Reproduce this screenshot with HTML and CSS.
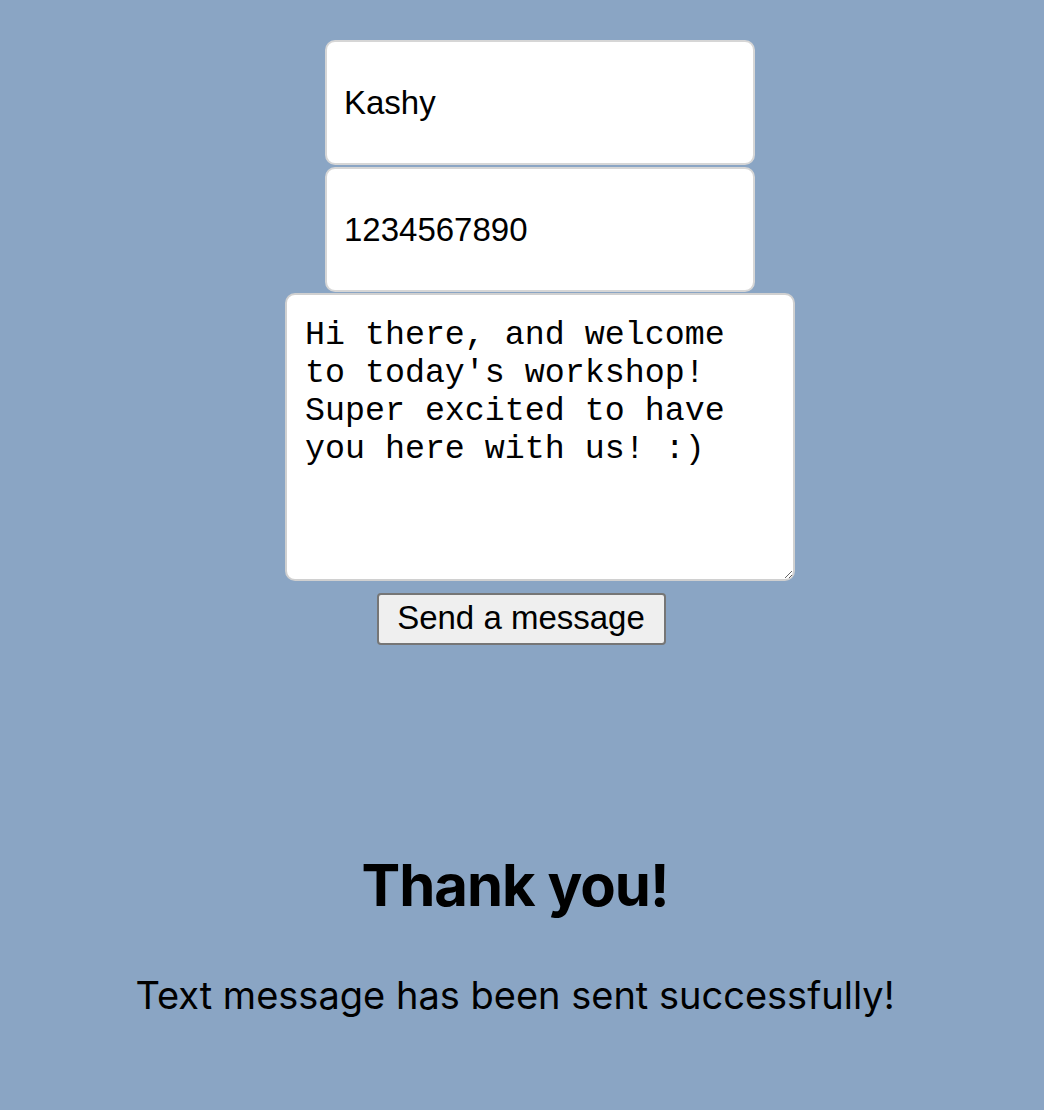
FILE: index.html
```html
<!DOCTYPE html>
<html>
<head>
<meta charset="utf-8">
<link rel="stylesheet" href="styles.css">
</head>
<body>
<main class="page">
  <form class="form">
    <input class="field" type="text" value="Kashy">
    <input class="field field-second" type="text" value="1234567890">
    <textarea class="message">Hi there, and welcome to today's workshop! Super excited to have you here with us! :)</textarea>
    <button class="send" type="button">Send a message</button>
  </form>
  <section class="thanks">
    <h1 class="thanks-title">Thank you!</h1>
    <p class="thanks-text">Text message has been sent successfully!</p>
  </section>
</main>
</body>
</html>
```
FILE: styles.css
```css
html, body {
  margin: 0;
  padding: 0;
  background: #8aa5c4;
}
body {
  width: 1044px;
  height: 1110px;
  overflow: hidden;
}
.page {
  display: flex;
  flex-direction: column;
  align-items: center;
  padding-top: 40px;
}
.form {
  display: flex;
  flex-direction: column;
  align-items: center;
}
.field {
  box-sizing: border-box;
  width: 430px;
  height: 125px;
  margin: 0 0 0 36px;
  padding: 0 17px;
  border: 2px solid #d6d6d6;
  border-radius: 10px;
  background: #fff;
  font-family: "Liberation Sans", Arial, sans-serif;
  font-size: 33px;
  color: #000;
  outline: none;
}
.field-second {
  margin-top: 2px;
}
.message {
  box-sizing: border-box;
  width: 510px;
  height: 288px;
  margin: 1px 0 0 36px;
  padding: 21px 18px 18px 18px;
  border: 2px solid #d0d0d0;
  border-radius: 10px;
  background: #fff;
  font-family: "Liberation Mono", "Courier New", monospace;
  font-size: 33.3px;
  line-height: 38px;
  color: #000;
  resize: both;
  outline: none;
}
.send {
  box-sizing: border-box;
  margin: 12px 0 0 -2px;
  width: 289px;
  height: 52px;
  padding: 0 0 2px 0;
  border: 2px solid #767676;
  border-radius: 4px;
  background: #efefef;
  font-family: "Liberation Sans", Arial, sans-serif;
  font-size: 33px;
  color: #000;
}
.thanks {
  display: flex;
  flex-direction: column;
  align-items: center;
  margin-top: 205px;
  padding-right: 14px;
  font-family: Inter, "Noto Sans", sans-serif;
  color: #000;
}
.thanks-title {
  margin: 0;
  font-size: 58px;
  font-weight: 700;
  letter-spacing: -1px;
  line-height: 70px;
}
.thanks-text {
  margin: 52px 0 0 0;
  font-size: 38px;
  font-weight: 400;
  line-height: 46px;
}
```
